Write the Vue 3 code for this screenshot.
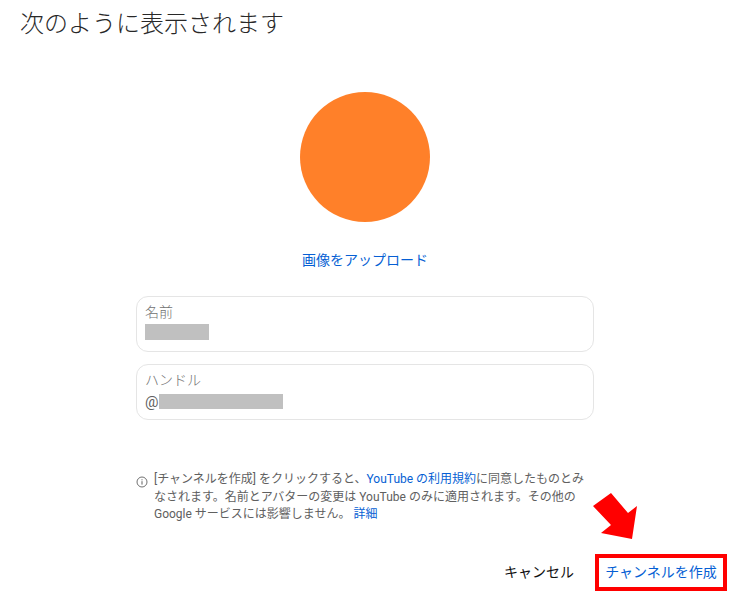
<script setup>
const fields = [
  { label: '名前', prefix: '', width: 64, height: 16 },
  { label: 'ハンドル', prefix: '@', width: 124, height: 15 },
]
</script>

<template>
  <main class="dialog">
    <h1 class="title">次のように表示されます</h1>
    <section class="profile">
      <div class="avatar"></div>
      <a class="link upload">画像をアップロード</a>
    </section>
    <section class="fields">
      <div v-for="f in fields" :key="f.label" class="field">
        <div class="label">{{ f.label }}</div>
        <div class="value">
          <span v-if="f.prefix" class="prefix">{{ f.prefix }}</span>
          <span class="mask" :style="{ width: f.width + 'px', height: f.height + 'px' }"></span>
        </div>
      </div>
    </section>
    <section class="notice">
      <svg class="info" viewBox="0 0 12 12" width="12" height="12" aria-hidden="true">
        <circle cx="6" cy="6" r="5" fill="none" stroke="#606060" stroke-width="0.9" />
        <rect x="5.5" y="5.2" width="1" height="3.4" fill="#606060" />
        <rect x="5.5" y="3.3" width="1" height="1" fill="#606060" />
      </svg>
      <p class="notice-text">[チャンネルを作成] をクリックすると、<a class="link">YouTube の利用規約</a>に同意したものとみなされます。名前とアバターの変更は YouTube のみに適用されます。その他の Google サービスには影響しません。 <a class="link">詳細</a></p>
    </section>
    <footer class="actions">
      <button class="btn cancel">キャンセル</button>
      <button class="btn create">チャンネルを作成</button>
    </footer>
    <svg class="arrow" viewBox="0 0 730 594" width="730" height="594" aria-hidden="true">
      <polygon points="632,539 637,506 628,513 611,493 593,506 611,525 601,533" fill="#ff0000" />
    </svg>
  </main>
</template>

<style scoped>
.dialog {
  position: relative;
  width: 730px;
  height: 594px;
  overflow: hidden;
  background: #fff;
  font-family: Roboto, "Noto Sans CJK JP", sans-serif;
  color: #606060;
}
.title {
  margin: 0;
  padding: 8px 0 0 20px;
  font-size: 24px;
  line-height: 32px;
  font-weight: 300;
  color: #282828;
}
.profile {
  display: flex;
  flex-direction: column;
  align-items: center;
  margin-top: 52px;
}
.avatar {
  width: 130px;
  height: 130px;
  border-radius: 50%;
  background: #ff8029;
}
.link {
  color: #065fd4;
  text-decoration: none;
}
.upload {
  margin-top: 28px;
  font-size: 14px;
  line-height: 20px;
}
.fields {
  display: flex;
  flex-direction: column;
  gap: 12px;
  width: 458px;
  margin: 26px 0 0 136px;
}
.field {
  box-sizing: border-box;
  height: 56px;
  padding: 5px 8px;
  border: 1px solid #e5e5e5;
  border-radius: 12px;
}
.field + .field .value {
  margin-top: 4px;
}
.label {
  font-size: 14px;
  line-height: 20px;
  color: #717171;
  font-weight: 300;
}
.value {
  display: flex;
  align-items: flex-start;
  height: 16px;
  margin-top: 2px;
  font-size: 15px;
  line-height: 16px;
}
.prefix {
  width: 14px;
}
.mask {
  display: block;
  background: #c0c0c0;
}
.notice {
  display: flex;
  gap: 6px;
  width: 458px;
  margin: 51px 0 0 136px;
}
.info {
  flex: none;
  margin-top: 5px;
}
.notice-text {
  margin: 0;
  width: 440px;
  font-size: 12px;
  line-height: 17.5px;
  color: #606060;
}
.actions {
  position: absolute;
  right: 3px;
  bottom: 3px;
  display: flex;
  align-items: center;
  gap: 21px;
}
.btn {
  padding: 0;
  border: 0;
  background: none;
  font: inherit;
  font-size: 14px;
  line-height: 29px;
}
.cancel {
  color: #0f0f0f;
}
.create {
  box-sizing: border-box;
  width: 132px;
  height: 37px;
  border: 4px solid #ff0000;
  color: #065fd4;
}
.arrow {
  position: absolute;
  inset: 0;
  pointer-events: none;
}
</style>
